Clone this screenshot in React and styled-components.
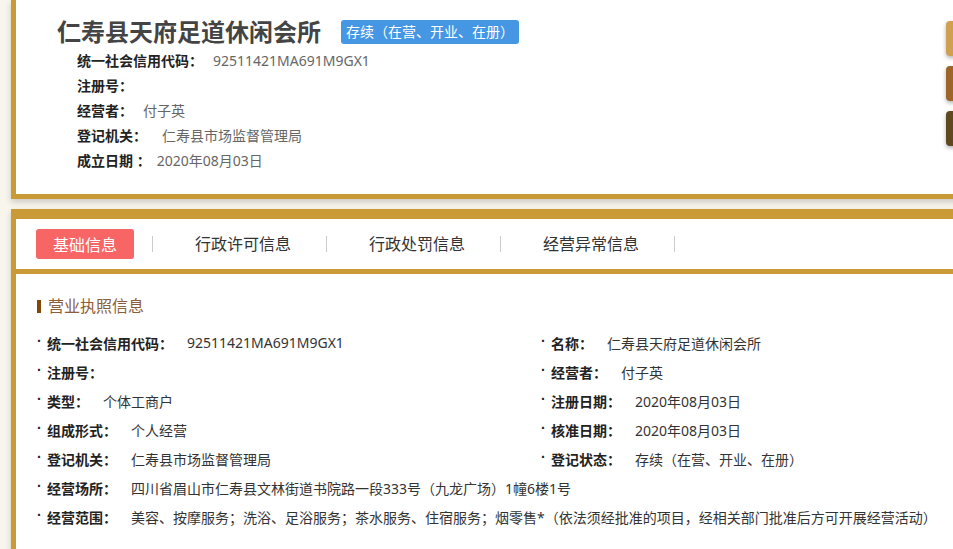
import React from 'react';
import styled, { createGlobalStyle } from 'styled-components';

const GOLD = '#c99a36';

const Global = createGlobalStyle`
  html, body { margin: 0; padding: 0; background: #f8f5ed; overflow: hidden; }
  body {
    font-family: "Noto Sans", "Noto Sans CJK SC", "Microsoft YaHei", sans-serif;
    font-size: 14px;
    color: #333;
  }
`;

const Page = styled.div`
  width: 1100px;
  padding-left: 11px;
  display: flex;
  flex-direction: column;
  gap: 10px;
`;

const HeaderCard = styled.section`
  background: #fff;
  border-left: 5px solid ${GOLD};
  border-bottom: 5px solid ${GOLD};
  box-shadow: 0 3px 6px rgba(0, 0, 0, 0.18);
  padding: 16px 0 21px 41px;
`;

const TitleRow = styled.div`
  display: flex;
  align-items: center;
  gap: 20px;
  height: 32px;
`;

const Title = styled.h1`
  margin: 0;
  font-size: 24px;
  line-height: 32px;
  font-weight: bold;
  color: #444;
`;

const Badge = styled.span`
  background: #4596e3;
  color: #fff;
  font-size: 14px;
  line-height: 24px;
  padding: 0 5px;
  border-radius: 3px;
`;

const InfoList = styled.div`
  padding-left: 20px;
  display: flex;
  flex-direction: column;
`;

const InfoRow = styled.div`
  display: flex;
  line-height: 25px;
  white-space: nowrap;
`;

const InfoLabel = styled.span`
  font-weight: bold;
  color: #222;
`;

const InfoValue = styled.span`
  color: #666;
  margin-left: ${(p) => p.$gap}px;
`;

const MainCard = styled.section`
  background: #fff;
  border-left: 5px solid ${GOLD};
  border-top: 10px solid ${GOLD};
  box-shadow: 0 3px 6px rgba(0, 0, 0, 0.18);
  min-height: 400px;
`;

const TabBar = styled.nav`
  display: flex;
  align-items: center;
  height: 50px;
  padding-left: 20px;
  border-bottom: 5px solid ${GOLD};
`;

const Tab = styled.div`
  font-size: 16px;
  cursor: pointer;
  ${(p) =>
    p.$active
      ? `
    width: 98px;
    height: 30px;
    background: #f86565;
    color: #fff;
    border-radius: 3px;
    display: flex;
    align-items: center;
    justify-content: center;
    margin-right: 18px;
  `
      : `
    width: 173px;
    box-sizing: border-box;
    padding-left: 42px;
    color: #333;
    line-height: 30px;
  `}
`;

const TabDivider = styled.span`
  width: 1px;
  height: 16px;
  background: #ccc;
`;

const Body = styled.div`
  padding: 20px 21px 0;
`;

const SectionTitle = styled.h2`
  margin: 0;
  display: flex;
  align-items: center;
  font-size: 16px;
  line-height: 24px;
  font-weight: normal;
  color: #8c5d3b;
  &::before {
    content: '';
    width: 4px;
    height: 13px;
    background: #844708;
    margin-right: 7px;
  }
`;

const FieldGrid = styled.div`
  margin-top: 10px;
  display: grid;
  grid-template-columns: 504px 1fr;
  grid-auto-rows: 29px;
`;

const Field = styled.div`
  display: flex;
  align-items: center;
  white-space: nowrap;
  grid-column: ${(p) => (p.$wide ? '1 / -1' : 'auto')};
`;

const Bullet = styled.span`
  width: 10px;
  flex: none;
  font-family: "Liberation Sans", sans-serif;
  color: #222;
  font-weight: bold;
  position: relative;
  top: -2px;
`;

const FieldLabel = styled.span`
  font-weight: bold;
  color: #222;
`;

const FieldValue = styled.span`
  margin-left: 14px;
  color: #333;
`;

const SideTabs = styled.div`
  position: fixed;
  top: 21px;
  right: -31px;
  display: flex;
  flex-direction: column;
  gap: 10px;
`;

const SideTab = styled.div`
  width: 38px;
  height: 35px;
  border-radius: 4px;
  background: ${(p) => p.$color};
  box-shadow: 0 2px 4px rgba(0, 0, 0, 0.3);
`;

const headerInfo = [
  { label: '统一社会信用代码：', value: '92511421MA691M9GX1', gap: 10 },
  { label: '注册号：', value: '', gap: 10 },
  { label: '经营者：', value: '付子英', gap: 10 },
  { label: '登记机关：', value: '仁寿县市场监督管理局', gap: 15 },
  { label: '成立日期 ：', value: '2020年08月03日', gap: 6 },
];

const fields = [
  { label: '统一社会信用代码：', value: '92511421MA691M9GX1' },
  { label: '名称：', value: '仁寿县天府足道休闲会所' },
  { label: '注册号：', value: '' },
  { label: '经营者：', value: '付子英' },
  { label: '类型：', value: '个体工商户' },
  { label: '注册日期：', value: '2020年08月03日' },
  { label: '组成形式：', value: '个人经营' },
  { label: '核准日期：', value: '2020年08月03日' },
  { label: '登记机关：', value: '仁寿县市场监督管理局' },
  { label: '登记状态：', value: '存续（在营、开业、在册）' },
  { label: '经营场所：', value: '四川省眉山市仁寿县文林街道书院路一段333号（九龙广场）1幢6楼1号', wide: true },
  {
    label: '经营范围：',
    value: '美容、按摩服务；洗浴、足浴服务；茶水服务、住宿服务；烟零售*（依法须经批准的项目，经相关部门批准后方可开展经营活动）',
    wide: true,
  },
];

const tabs = ['基础信息', '行政许可信息', '行政处罚信息', '经营异常信息'];

export default function App() {
  return (
    <>
      <Global />
      <Page>
        <HeaderCard>
          <TitleRow>
            <Title>仁寿县天府足道休闲会所</Title>
            <Badge>存续（在营、开业、在册）</Badge>
          </TitleRow>
          <InfoList>
            {headerInfo.map((r) => (
              <InfoRow key={r.label}>
                <InfoLabel>{r.label}</InfoLabel>
                <InfoValue $gap={r.gap}>{r.value}</InfoValue>
              </InfoRow>
            ))}
          </InfoList>
        </HeaderCard>
        <MainCard>
          <TabBar>
            {tabs.map((t, i) => (
              <React.Fragment key={t}>
                <Tab $active={i === 0}>{t}</Tab>
                <TabDivider />
              </React.Fragment>
            ))}
          </TabBar>
          <Body>
            <SectionTitle>营业执照信息</SectionTitle>
            <FieldGrid>
              {fields.map((f) => (
                <Field key={f.label} $wide={f.wide}>
                  <Bullet>·</Bullet>
                  <FieldLabel>{f.label}</FieldLabel>
                  <FieldValue>{f.value}</FieldValue>
                </Field>
              ))}
            </FieldGrid>
          </Body>
        </MainCard>
      </Page>
      <SideTabs>
        <SideTab $color="#cfa050" />
        <SideTab $color="#9b6627" />
        <SideTab $color="#5f4a1f" />
      </SideTabs>
    </>
  );
}
